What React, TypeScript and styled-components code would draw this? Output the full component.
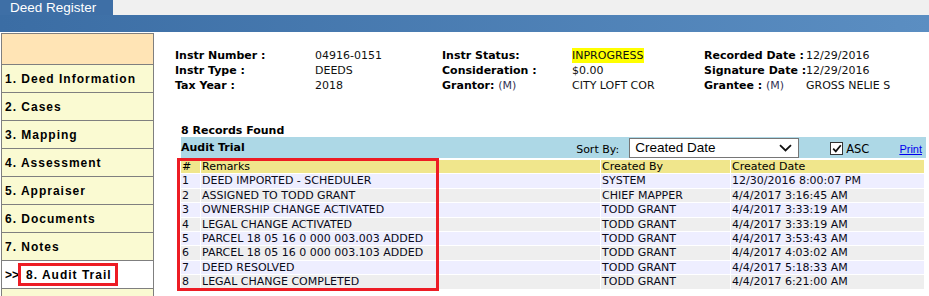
import React from 'react';
import styled, { createGlobalStyle } from 'styled-components';

const GlobalStyle = createGlobalStyle`
  body {
    margin: 0;
    background: #ffffff;
    font-family: "DejaVu Sans", Verdana, sans-serif;
    font-size: 11px;
    color: #000;
  }
`;

const TopStrip = styled.div`
  height: 15px;
  background: #f0f0f0;
  display: flex;
`;

const Tab = styled.div`
  width: 113px;
  background: #3e6fa6;
  color: #fff;
  font-family: "Liberation Sans", Arial, sans-serif;
  font-size: 13.5px;
  line-height: 15px;
  padding-left: 10px;
  box-sizing: border-box;
  white-space: nowrap;
`;

const BlueBar = styled.div`
  height: 17px;
  background: linear-gradient(to right, #3b6da4, #5b8ec2);
`;

const Body = styled.div`
  display: flex;
  margin-top: 1px;
`;

const Nav = styled.div`
  width: 151px;
  margin-left: 1px;
  border-left: 1px solid #7f7f7f;
  border-right: 1px solid #7f7f7f;
  background: #fafad2;
  font-family: "Liberation Sans", Arial, sans-serif;
  font-weight: bold;
  font-size: 12px;
  letter-spacing: 1px;
  align-self: flex-start;
  height: 263px;
`;

const NavHead = styled.div`
  height: 30px;
  background: #ffe4b5;
  border-top: 1px solid #7f7f7f;
  border-bottom: 1px solid #7f7f7f;
`;

const NavItem = styled.div<{ $active?: boolean }>`
  height: 27px;
  border-bottom: 1px solid #7f7f7f;
  background: ${(p) => (p.$active ? '#ffffff' : '#fafad2')};
  display: flex;
  align-items: center;
  padding-left: 3px;
  white-space: nowrap;
`;

const Marker = styled.span`
  letter-spacing: 0;
  margin-right: 2px;
`;

const ActiveLabel = styled.span`
  outline: 3px solid #ed1c24;
  outline-offset: 0;
  padding: 2px 3px 1px 5px;
`;

const Main = styled.div`
  flex: 1;
  padding: 15px 3px 0 21px;
`;

const InfoGrid = styled.div`
  display: grid;
  grid-template-columns: 140px 127px 130px 132px 102px 1fr;
  grid-auto-rows: 15px;
  line-height: 15px;
  white-space: nowrap;
`;

const Label = styled.div`
  font-weight: bold;
`;

const Value = styled.div`
  color: #111;
`;

const Muted = styled.span`
  font-weight: normal;
  color: #333355;
`;

const Highlight = styled.span`
  background: #ffff00;
  padding: 1px 0;
`;

const Records = styled.div`
  margin-left: 6px;
`;

const Found = styled.div`
  font-weight: bold;
  margin-top: 31px;
  line-height: 14px;
`;

const Bar = styled.div`
  height: 21px;
  background: #add8e6;
  display: flex;
  align-items: center;
  margin-top: -1px;
  padding-right: 4px;
`;

const BarTitle = styled.div`
  font-weight: bold;
  margin-right: auto;
`;

const SortLabel = styled.span`
  margin-right: 10px;
  margin-top: 3px;
`;

const SelectBox = styled.div`
  width: 170px;
  height: 20px;
  box-sizing: border-box;
  border: 1px solid #767676;
  background: #fff;
  display: flex;
  align-items: center;
  justify-content: space-between;
  padding: 0 6px 0 5px;
  font-family: "Liberation Sans", Arial, sans-serif;
  font-size: 13.5px;
  margin-right: 31px;
`;

const Check = styled.span`
  width: 13px;
  height: 13px;
  box-sizing: border-box;
  border: 1px solid #333;
  background: #fff;
  display: flex;
  align-items: center;
  justify-content: center;
  margin-right: 3px;
  margin-top: 2px;
`;

const CheckLabel = styled.span`
  margin-right: 30px;
  margin-top: 3px;
  font-size: 11.5px;
`;

const PrintLink = styled.a`
  color: #0000ee;
  text-decoration: underline;
  font-family: "Liberation Sans", Arial, sans-serif;
  font-size: 11px;
  margin-top: 2px;
`;

const TableWrap = styled.div`
  position: relative;
`;

const Grid = styled.table`
  width: 100%;
  border-collapse: separate;
  border-spacing: 1px;
  margin-left: -1px;
  margin-top: 1px;
  table-layout: fixed;
`;

const Head = styled.th`
  background: #f0e68c;
  font-weight: normal;
  text-align: left;
  padding: 0 1px;
  line-height: 13.4px;
  white-space: nowrap;
`;

const Row = styled.tr<{ $odd: boolean }>`
  background: ${(p) => (p.$odd ? '#eeeeff' : '#eeeeee')};
`;

const Cell = styled.td`
  padding: 0 1px;
  line-height: 13.4px;
  white-space: nowrap;
  color: #0a0a1a;
`;

const RedBox = styled.div`
  position: absolute;
  left: -4px;
  top: -1px;
  width: 262px;
  height: 133px;
  border: 3px solid #ed1c24;
  box-sizing: border-box;
  pointer-events: none;
`;

const navItems = [
  '1. Deed Information',
  '2. Cases',
  '3. Mapping',
  '4. Assessment',
  '5. Appraiser',
  '6. Documents',
  '7. Notes',
];

const rows = [
  ['DEED IMPORTED - SCHEDULER', 'SYSTEM', '12/30/2016 8:00:07 PM'],
  ['ASSIGNED TO TODD GRANT', 'CHIEF MAPPER', '4/4/2017 3:16:45 AM'],
  ['OWNERSHIP CHANGE ACTIVATED', 'TODD GRANT', '4/4/2017 3:33:19 AM'],
  ['LEGAL CHANGE ACTIVATED', 'TODD GRANT', '4/4/2017 3:33:19 AM'],
  ['PARCEL 18 05 16 0 000 003.003 ADDED', 'TODD GRANT', '4/4/2017 3:53:43 AM'],
  ['PARCEL 18 05 16 0 000 003.103 ADDED', 'TODD GRANT', '4/4/2017 4:03:02 AM'],
  ['DEED RESOLVED', 'TODD GRANT', '4/4/2017 5:18:33 AM'],
  ['LEGAL CHANGE COMPLETED', 'TODD GRANT', '4/4/2017 6:21:00 AM'],
];

const App = () => {
  return (
    <>
      <GlobalStyle />
      <TopStrip>
        <Tab>Deed Register</Tab>
      </TopStrip>
      <BlueBar />
      <Body>
        <Nav>
          <NavHead />
          {navItems.map((item) => (
            <NavItem key={item}>{item}</NavItem>
          ))}
          <NavItem $active>
            <Marker>&gt;&gt;</Marker>
            <ActiveLabel>8. Audit Trail</ActiveLabel>
          </NavItem>
        </Nav>
        <Main>
          <InfoGrid>
            <Label>Instr Number :</Label>
            <Value>04916-0151</Value>
            <Label>Instr Status:</Label>
            <Value>
              <Highlight>INPROGRESS</Highlight>
            </Value>
            <Label>Recorded Date :</Label>
            <Value>12/29/2016</Value>

            <Label>Instr Type :</Label>
            <Value>DEEDS</Value>
            <Label>Consideration :</Label>
            <Value>$0.00</Value>
            <Label>Signature Date :</Label>
            <Value>12/29/2016</Value>

            <Label>Tax Year :</Label>
            <Value>2018</Value>
            <Label>
              Grantor: <Muted>(M)</Muted>
            </Label>
            <Value>CITY LOFT COR</Value>
            <Label>
              Grantee : <Muted>(M)</Muted>
            </Label>
            <Value>GROSS NELIE S</Value>
          </InfoGrid>

          <Records>
            <Found>8 Records Found</Found>
            <Bar>
              <BarTitle>Audit Trial</BarTitle>
              <SortLabel>Sort By:</SortLabel>
              <SelectBox>
                <span>Created Date</span>
                <svg width="13" height="8" viewBox="0 0 13 8">
                  <path d="M1 1.2 L6.5 6.5 L12 1.2" fill="none" stroke="#111" strokeWidth="1.8" />
                </svg>
              </SelectBox>
              <Check>
                <svg width="10" height="9" viewBox="0 0 10 9">
                  <path d="M1.2 4.6 L3.8 7.4 L8.8 1.2" fill="none" stroke="#111" strokeWidth="1.7" />
                </svg>
              </Check>
              <CheckLabel>ASC</CheckLabel>
              <PrintLink href="#">Print</PrintLink>
            </Bar>
            <TableWrap>
              <Grid>
                <colgroup>
                  <col style={{ width: 19 }} />
                  <col style={{ width: 399 }} />
                  <col style={{ width: 129 }} />
                  <col />
                </colgroup>
                <thead>
                  <tr>
                    <Head>#</Head>
                    <Head>Remarks</Head>
                    <Head>Created By</Head>
                    <Head>Created Date</Head>
                  </tr>
                </thead>
                <tbody>
                  {rows.map((r, i) => (
                    <Row key={i} $odd={i % 2 === 0}>
                      <Cell>{i + 1}</Cell>
                      <Cell>{r[0]}</Cell>
                      <Cell>{r[1]}</Cell>
                      <Cell>{r[2]}</Cell>
                    </Row>
                  ))}
                </tbody>
              </Grid>
              <RedBox />
            </TableWrap>
          </Records>
        </Main>
      </Body>
    </>
  );
};

export default App;
